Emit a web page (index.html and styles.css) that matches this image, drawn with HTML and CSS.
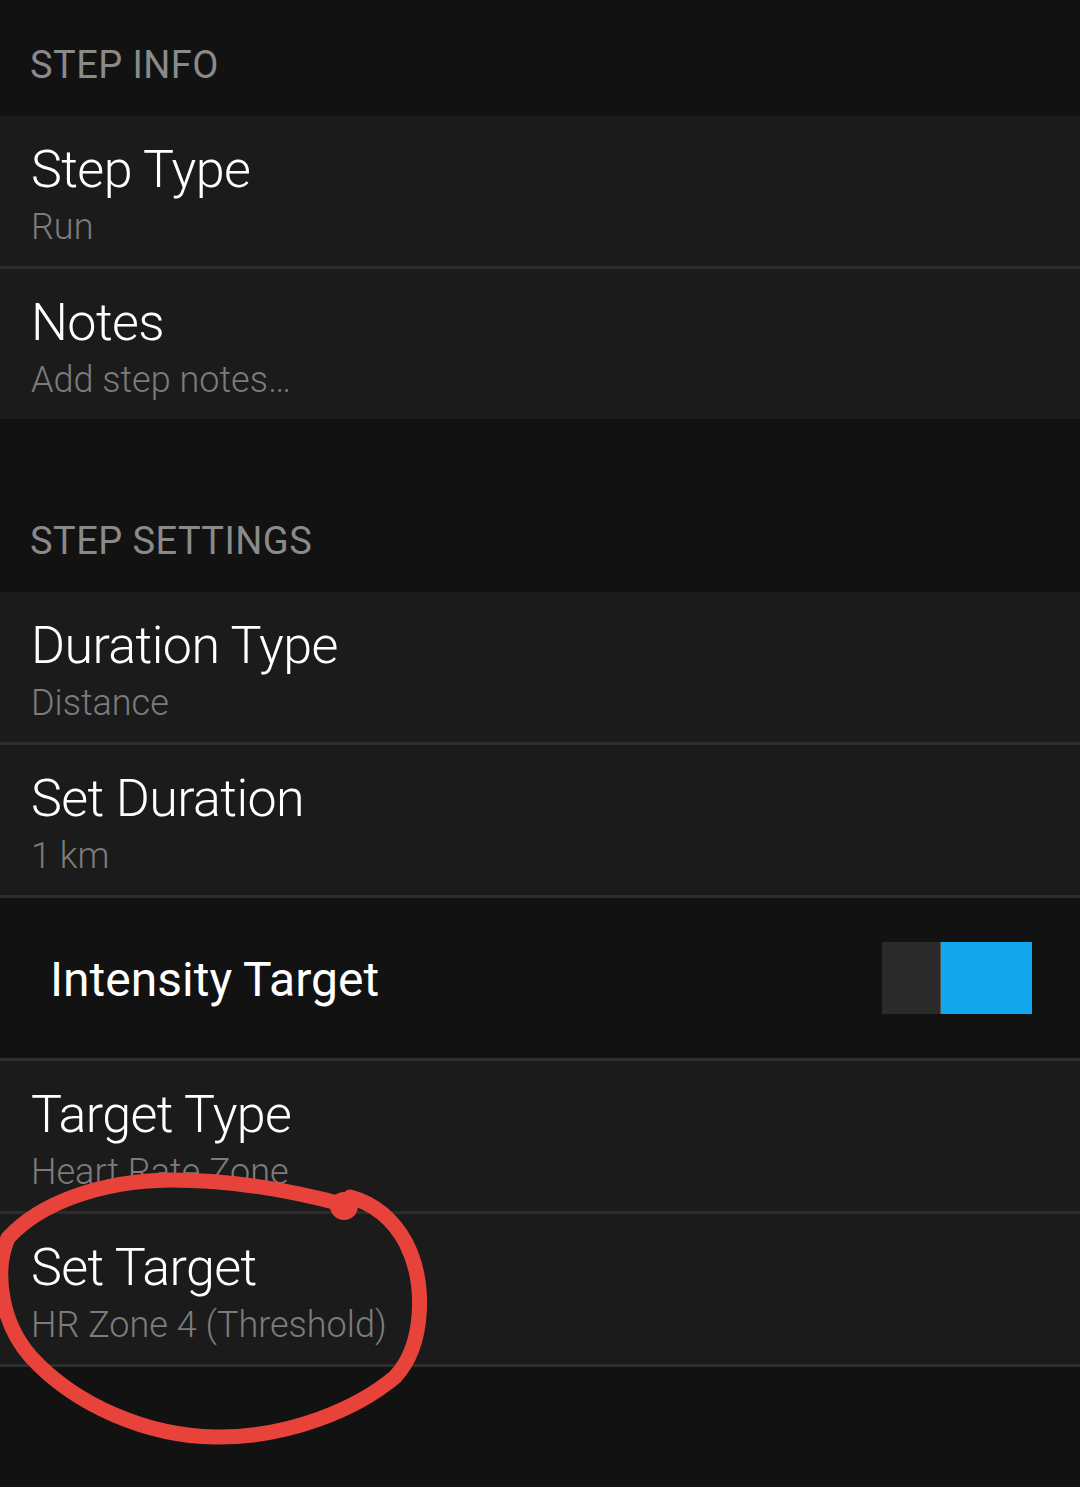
FILE: index.html
```html
<!DOCTYPE html>
<html lang="en">
<head>
<meta charset="utf-8">
<title>Step</title>
<link rel="stylesheet" href="styles.css">
</head>
<body>
<div class="page">
  <div class="section-header">STEP INFO</div>
  <div class="row divided">
    <div class="title">Step Type</div>
    <div class="sub">Run</div>
  </div>
  <div class="row">
    <div class="title">Notes</div>
    <div class="sub">Add step notes…</div>
  </div>
  <div class="section-header spaced">STEP SETTINGS</div>
  <div class="row divided">
    <div class="title">Duration Type</div>
    <div class="sub">Distance</div>
  </div>
  <div class="row divided">
    <div class="title">Set Duration</div>
    <div class="sub">1 km</div>
  </div>
  <div class="switch-row divided">
    <div class="switch-label">Intensity Target</div>
    <div class="toggle"><span class="toggle-off"></span><span class="toggle-on"></span></div>
  </div>
  <div class="row divided">
    <div class="title">Target Type</div>
    <div class="sub">Heart Rate Zone</div>
  </div>
  <div class="row divided">
    <div class="title">Set Target</div>
    <div class="sub">HR Zone 4 (Threshold)</div>
  </div>
  <svg class="annotation" width="1080" height="1487" viewBox="0 0 1080 1487">
    <path d="M 345 1205 C 290 1190, 230 1180, 170 1180 C 100 1181, 40 1203, 8 1238 C -6 1270, 0 1322, 31 1357 C 76 1406, 148 1436, 215 1437 C 290 1438, 358 1408, 395 1377 C 425 1345, 426 1282, 406 1243 C 392 1217, 372 1203, 350 1197" fill="none" stroke="#e8433a" stroke-width="15" stroke-linecap="round"/>
    <circle cx="344" cy="1206" r="14" fill="#e8433a"/>
  </svg>
</div>
</body>
</html>
```

FILE: styles.css
```css
html, body {
  margin: 0;
  padding: 0;
  background: #121212;
}
.page {
  position: relative;
  width: 1080px;
  min-height: 1487px;
  background: #121212;
  font-family: Roboto, "Liberation Sans", sans-serif;
  overflow: hidden;
}
.section-header {
  padding: 43px 30px 29px;
  font-size: 38px;
  line-height: 44px;
  color: #8a8a8a;
  font-weight: 400;
  letter-spacing: 0.45px;
}
.section-header.spaced {
  padding-top: 100px;
}
.row {
  background: #1b1b1b;
  padding: 24px 31px 18px;
  height: 108px;
}
.divided {
  border-bottom: 3px solid #2d2d2d;
}
.title {
  font-size: 52px;
  line-height: 60px;
  font-weight: 300;
  color: #ffffff;
  letter-spacing: -0.6px;
}
.sub {
  margin-top: 6px;
  font-size: 36px;
  line-height: 42px;
  font-weight: 300;
  color: #7c7c7c;
  white-space: nowrap;
}
.switch-row {
  height: 160px;
  display: flex;
  align-items: center;
  justify-content: space-between;
  padding: 0 48px 0 50px;
  background: #121212;
}
.switch-label {
  font-size: 48px;
  line-height: 56px;
  color: #ffffff;
  font-weight: 400;
  padding-top: 4px;
}
.toggle {
  display: flex;
  width: 150px;
  height: 72px;
}
.toggle-off {
  width: 58px;
  background: #2a2a2a;
  border-right: 1px solid #555555;
}
.toggle-on {
  flex: 1;
  background: #12a7ec;
}
.annotation {
  position: absolute;
  left: 0;
  top: 0;
  pointer-events: none;
}
```
